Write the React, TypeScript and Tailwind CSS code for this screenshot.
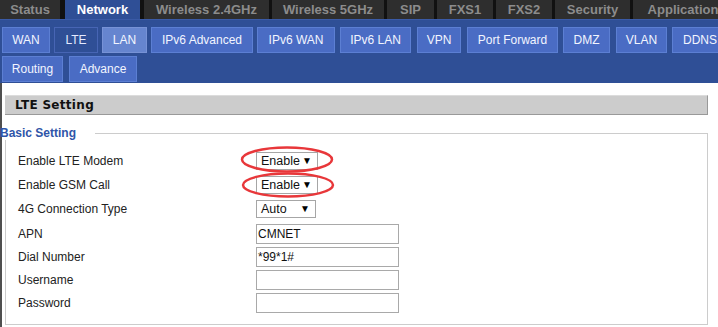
import React from "react";

const topTabs = [
  { label: "Status", cls: "w-[60px] bg-[#2e2e2e] text-[#8c8c8c]" },
  { label: "Network", cls: "ml-[5px] w-[75px] bg-[#2f4f96] text-white" },
  { label: "Wireless 2.4GHz", cls: "ml-[4px] w-[125px] bg-[#2e2e2e] text-[#8c8c8c]" },
  { label: "Wireless 5GHz", cls: "ml-[3px] w-[112px] bg-[#2e2e2e] text-[#8c8c8c]" },
  { label: "SIP", cls: "ml-[3px] w-[47px] bg-[#2e2e2e] text-[#8c8c8c]" },
  { label: "FXS1", cls: "ml-[3px] w-[56px] bg-[#2e2e2e] text-[#8c8c8c]" },
  { label: "FXS2", cls: "ml-[3px] w-[56px] bg-[#2e2e2e] text-[#8c8c8c]" },
  { label: "Security", cls: "ml-[3px] w-[75px] bg-[#2e2e2e] text-[#8c8c8c]" },
  { label: "Application", cls: "ml-[3px] w-[100px] bg-[#2e2e2e] text-[#8c8c8c]" },
];

const tab = "h-[26px] shrink-0 flex items-center justify-center border text-[12px]";
const normal = "bg-[#4a6cc4] border-[#5c7fd3] text-[#f2f5ff]";

const subRow1 = [
  { label: "WAN", cls: "ml-[2px] w-[48px] " + normal },
  { label: "LTE", cls: "ml-[4px] w-[44px] bg-[#2f4f96] border-[#4765b4] text-[#e4eaff]" },
  { label: "LAN", cls: "ml-[4px] w-[45px] bg-[#6685cf] border-[#7792d6] text-[#f2f5ff]" },
  { label: "IPv6 Advanced", cls: "ml-[4px] w-[102px] " + normal },
  { label: "IPv6 WAN", cls: "ml-[4px] w-[78px] " + normal },
  { label: "IPv6 LAN", cls: "ml-[5px] w-[71px] " + normal },
  { label: "VPN", cls: "ml-[6px] w-[44px] " + normal },
  { label: "Port Forward", cls: "ml-[6px] w-[91px] " + normal },
  { label: "DMZ", cls: "ml-[5px] w-[47px] " + normal },
  { label: "VLAN", cls: "ml-[6px] w-[51px] " + normal },
  { label: "DDNS", cls: "ml-[5px] w-[56px] " + normal },
];

const subRow2 = [
  { label: "Routing", cls: "ml-[2px] w-[61px] " + normal },
  { label: "Advance", cls: "ml-[6px] w-[68px] " + normal },
];

function Select({ value, cls }: { value: string; cls: string }) {
  return (
    <div className={`h-[18px] border border-[#a6a6a6] bg-white flex items-center justify-between pl-[4px] pr-[5px] text-[12.5px] text-[#111] ${cls}`}>
      <span>{value}</span>
      <span className="text-[10px] leading-none text-black">▼</span>
    </div>
  );
}

function TextBox({ value }: { value?: string }) {
  return (
    <div className="h-[20px] w-[143px] border border-[#a9a9a9] bg-white flex items-center pl-[1px] text-[12px] text-[#111]">
      {value}
    </div>
  );
}

export default function App() {
  return (
    <div
      className="relative w-[718px] h-[327px] overflow-hidden bg-white"
      style={{ fontFamily: '"Liberation Sans", Arial, sans-serif' }}
    >
      {/* top menu */}
      <div className="flex h-[19px] bg-[#111] font-bold text-[13px] whitespace-nowrap">
        {topTabs.map((t) => (
          <div key={t.label} className={`shrink-0 flex items-center justify-center ${t.cls}`}>
            {t.label}
          </div>
        ))}
      </div>

      {/* sub menu */}
      <div className="h-[64px] bg-[#2f4f96] border-t border-[#3a5aa6] pt-[7px] flex flex-col gap-[3px] whitespace-nowrap">
        <div className="flex">
          {subRow1.map((t) => (
            <div key={t.label} className={`${tab} ${t.cls}`}>
              {t.label}
            </div>
          ))}
        </div>
        <div className="flex">
          {subRow2.map((t) => (
            <div key={t.label} className={`${tab} ${t.cls}`}>
              {t.label}
            </div>
          ))}
        </div>
      </div>

      {/* content */}
      <div className="flex h-[244px]">
        <div className="w-[2px] shrink-0 bg-[#4f4f4f]" />
        <div className="w-[703px] ml-[3px] pt-[12px]">
          <div className="h-[20px] bg-[#cccccc] border-t border-t-[#dcdcdc] border-r border-r-[#999] border-b border-b-[#999] flex items-center pl-[10px]">
            <span
              className="font-bold text-[12px] tracking-[0.3px] text-[#111]"
              style={{ fontFamily: '"DejaVu Sans", Verdana, sans-serif' }}
            >
              LTE Setting
            </span>
          </div>

          <fieldset className="mt-[11px] w-[703px] border border-[#cccccc] pb-[10px]">
            <legend className="-ml-[6px] pr-[19px] h-[14px] leading-[14px] font-bold text-[12px] text-[#2f55a8]">
              Basic Setting
            </legend>
            <div className="flex flex-col mt-[9px] pl-[12px] text-[12px] text-[#222]">
              <div className="h-[24px] flex items-center">
                <span className="w-[238px]">Enable LTE Modem</span>
                <Select value="Enable" cls="w-[62px]" />
              </div>
              <div className="h-[24px] flex items-center">
                <span className="w-[238px]">Enable GSM Call</span>
                <Select value="Enable" cls="w-[62px]" />
              </div>
              <div className="h-[24px] flex items-center">
                <span className="w-[238px]">4G Connection Type</span>
                <Select value="Auto" cls="w-[60px] h-[17px]" />
              </div>
              <div className="h-[23px] mt-[1px] flex items-center">
                <span className="w-[238px]">APN</span>
                <TextBox value="CMNET" />
              </div>
              <div className="h-[23px] flex items-center">
                <span className="w-[238px]">Dial Number</span>
                <TextBox value="*99*1#" />
              </div>
              <div className="h-[23px] flex items-center">
                <span className="w-[238px]">Username</span>
                <TextBox />
              </div>
              <div className="h-[23px] flex items-center">
                <span className="w-[238px]">Password</span>
                <TextBox />
              </div>
            </div>
          </fieldset>
        </div>
      </div>

      {/* red annotation marks */}
      <svg className="absolute left-0 top-0 pointer-events-none" width="718" height="327">
        <ellipse cx="287" cy="159.5" rx="45" ry="12" fill="none" stroke="#e8373a" strokeWidth="2.5" />
        <ellipse cx="288" cy="185" rx="45" ry="11.5" fill="none" stroke="#e8373a" strokeWidth="2.5" />
      </svg>
    </div>
  );
}
